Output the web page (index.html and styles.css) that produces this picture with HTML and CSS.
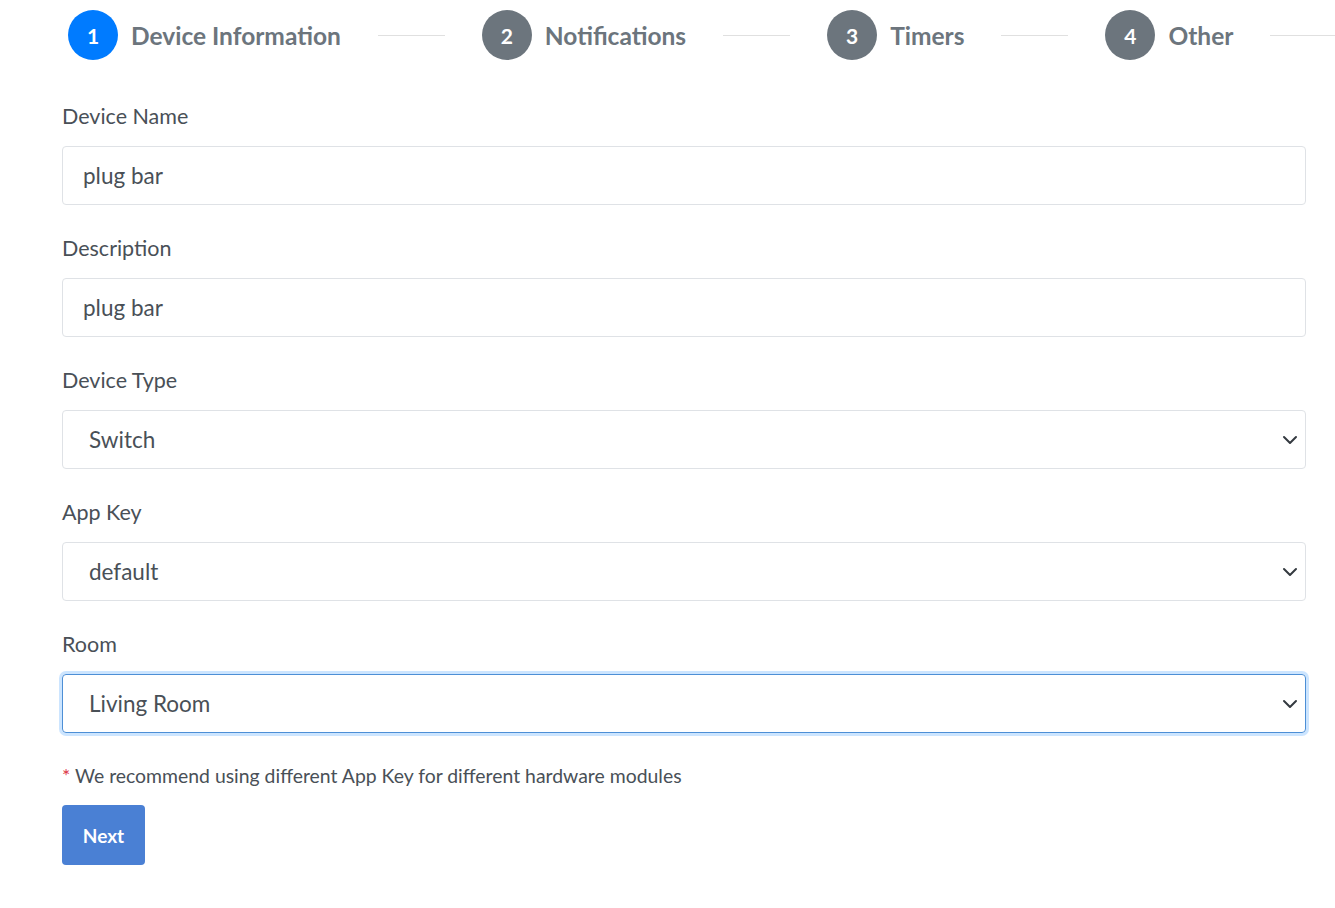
FILE: index.html
```html
<!DOCTYPE html>
<html lang="en">
<head>
<meta charset="utf-8">
<title>Device</title>
<link rel="stylesheet" href="styles.css">
</head>
<body>
<div class="page">
  <div class="stepper">
    <div class="step active"><span class="circle">1</span><span class="step-label">Device Information</span></div>
    <div class="line"></div>
    <div class="step"><span class="circle">2</span><span class="step-label">Notifications</span></div>
    <div class="line"></div>
    <div class="step"><span class="circle">3</span><span class="step-label">Timers</span></div>
    <div class="line"></div>
    <div class="step"><span class="circle">4</span><span class="step-label">Other</span></div>
    <div class="line"></div>
  </div>
  <form class="form">
    <div class="group">
      <label class="label">Device Name</label>
      <div class="control input">plug bar</div>
    </div>
    <div class="group">
      <label class="label">Description</label>
      <div class="control input">plug bar</div>
    </div>
    <div class="group">
      <label class="label">Device Type</label>
      <div class="control select"><span>Switch</span><svg class="chev" viewBox="0 0 16 16" width="16" height="16"><path d="M2 5l6 6 6-6" fill="none" stroke="#343a40" stroke-width="2" stroke-linecap="round" stroke-linejoin="round"/></svg></div>
    </div>
    <div class="group">
      <label class="label">App Key</label>
      <div class="control select"><span>default</span><svg class="chev" viewBox="0 0 16 16" width="16" height="16"><path d="M2 5l6 6 6-6" fill="none" stroke="#343a40" stroke-width="2" stroke-linecap="round" stroke-linejoin="round"/></svg></div>
    </div>
    <div class="group">
      <label class="label">Room</label>
      <div class="control select focus"><span>Living Room</span><svg class="chev" viewBox="0 0 16 16" width="16" height="16"><path d="M2 5l6 6 6-6" fill="none" stroke="#343a40" stroke-width="2" stroke-linecap="round" stroke-linejoin="round"/></svg></div>
    </div>
    <p class="help"><span class="req">*</span> We recommend using different App Key for different hardware modules</p>
    <button type="button" class="btn">Next</button>
  </form>
</div>
</body>
</html>
```

FILE: styles.css
```css
html, body {
  margin: 0;
  padding: 0;
  background: #ffffff;
  overflow: hidden;
}
body {
  font-family: "Lato", "Liberation Sans", sans-serif;
  color: #495057;
}
.page {
  width: 1335px;
  height: 908px;
  overflow: hidden;
}
.stepper {
  display: flex;
  align-items: center;
  gap: 37px;
  padding: 10px 0 0 68px;
  height: 50px;
  white-space: nowrap;
}
.step {
  display: flex;
  align-items: center;
  gap: 13px;
  flex: none;
}
.circle {
  width: 50px;
  height: 50px;
  border-radius: 50%;
  background: #6c757d;
  color: #fff;
  font-weight: 700;
  font-size: 21px;
  display: flex;
  align-items: center;
  justify-content: center;
}
.step.active .circle {
  background: #007bff;
}
.step-label {
  font-weight: 700;
  font-size: 24.5px;
  color: #6c757d;
}
.line {
  flex: none;
  width: 67px;
  height: 1px;
  background: rgba(0, 0, 0, 0.12);
}
.form {
  margin: 41px 0 0 62px;
  width: 1244px;
}
.group {
  margin-bottom: 28px;
}
.label {
  display: block;
  font-size: 21.5px;
  line-height: 30px;
  margin-bottom: 15px;
  color: #495057;
}
.control {
  box-sizing: border-box;
  height: 59px;
  border: 1px solid #dfe2e6;
  border-radius: 4px;
  display: flex;
  align-items: center;
  font-size: 22.5px;
  color: #495057;
}
.input {
  padding-left: 20px;
}
.select {
  padding-left: 26px;
  padding-right: 7px;
  justify-content: space-between;
}
.select.focus {
  border-color: #4d8fd6;
  box-shadow: 0 0 0 3px rgba(0, 123, 255, 0.2);
}
.chev {
  width: 16px;
  height: 16px;
}
.help {
  margin: 0 0 14px;
  font-size: 19.4px;
  line-height: 30px;
  color: #495057;
}
.req {
  color: #dc3545;
}
.btn {
  width: 83px;
  height: 60px;
  border: none;
  border-radius: 4px;
  background: #4a80d4;
  color: #fff;
  font-family: inherit;
  font-weight: 700;
  font-size: 19px;
  padding: 0;
}
```
